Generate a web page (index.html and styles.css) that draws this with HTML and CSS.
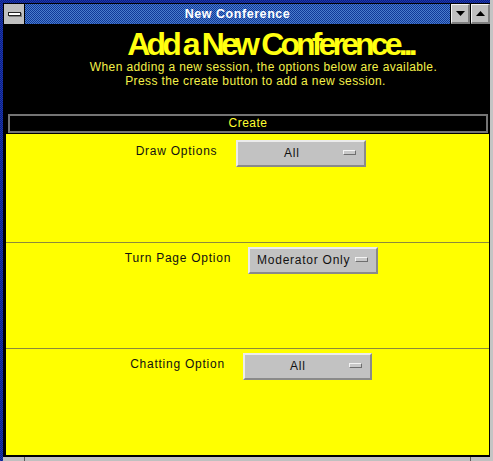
FILE: index.html
```html
<!DOCTYPE html>
<html>
<head>
<meta charset="utf-8">
<title>New Conference</title>
<link rel="stylesheet" href="styles.css">
</head>
<body>
<div class="window">
  <div class="titlebar">
    <div class="sysmenu"><span class="sysbar"></span></div>
    <div class="caption">New Conference</div>
    <div class="tbtn"><svg width="9" height="5" viewBox="0 0 9 5"><polygon points="0,0 9,0 4.5,5" fill="#000"/></svg></div>
    <div class="tbtn"><svg width="9" height="5" viewBox="0 0 9 5"><polygon points="0,5 9,5 4.5,0" fill="#000"/></svg></div>
  </div>
  <div class="client">
    <header class="banner">
      <h1 class="headline">Add a New Conference...</h1>
      <p class="intro intro-1">When adding a new session, the options below are available.</p>
      <p class="intro intro-2">Press the create button to add a new session.</p>
    </header>
    <div class="create">Create</div>
    <div class="panel">
      <section class="opt">
        <div class="row row-1">
          <span class="label">Draw Options</span>
          <div class="select"><span class="value">All</span><i class="ind"></i></div>
        </div>
      </section>
      <section class="opt sep">
        <div class="row row-2">
          <span class="label">Turn Page Option</span>
          <div class="select"><span class="value">Moderator Only</span><i class="ind"></i></div>
        </div>
      </section>
      <section class="opt sep">
        <div class="row row-3">
          <span class="label">Chatting Option</span>
          <div class="select narrow"><span class="value">All</span><i class="ind"></i></div>
        </div>
      </section>
    </div>
  </div>
  <div class="bottom"><span class="tick"></span><span class="tick"></span></div>
</div>
</body>
</html>
```

FILE: styles.css
```css
* { box-sizing: border-box; }
html, body { margin: 0; padding: 0; background: #000; }
body { font-family: "Liberation Sans", Arial, sans-serif; }

.window {
  width: 493px;
  height: 461px;
  background: repeating-conic-gradient(#0a1c88 0 25%, #1e3aa8 0 50%) 0 0 / 2px 2px;
  padding: 3px 0 0 3px;
  border-right: 3px solid #c4c4c4;
  display: flex;
  flex-direction: column;
  overflow: hidden;
}

.titlebar {
  height: 22px;
  background: #000;
  display: flex;
  column-gap: 1px;
  padding: 1px 0 1px 1px;
  flex: none;
}
.sysmenu {
  width: 20px;
  background: #c0c0c0;
  display: flex;
  align-items: center;
  justify-content: center;
}
.sysbar {
  width: 13px;
  height: 4px;
  background: #fff;
  border: 1px solid #222;
  box-shadow: 1px 1px 0 #808080;
}
.caption {
  flex: 1;
  background: repeating-conic-gradient(#103898 0 25%, #4a7ccc 0 50%) 0 0 / 2px 2px;
  color: #fff;
  font-weight: bold;
  font-size: 12.5px;
  letter-spacing: 0.55px;
  text-align: center;
  line-height: 20px;
}
.tbtn {
  width: 19px;
  background: #c0c0c0;
  border-top: 1px solid #f4f4f4;
  border-left: 1px solid #f4f4f4;
  border-right: 2px solid #808080;
  border-bottom: 2px solid #808080;
  display: flex;
  align-items: center;
  justify-content: center;
}

.client {
  flex: 1;
  background: #000;
  display: flex;
  flex-direction: column;
  min-height: 0;
}

.banner {
  padding-top: 4px;
  height: 89px;
  color: #ffff00;
}
.headline {
  margin: 0;
  font-size: 32px;
  line-height: 30px;
  font-weight: bold;
  letter-spacing: -3.85px;
  text-align: center;
  padding-left: 48px;
  color: #ffff10;
}
.intro {
  margin: 0;
  font-size: 12px;
  line-height: 13px;
  letter-spacing: 0.38px;
  text-align: center;
  color: #f4f048;
}
.intro-1 { padding-left: 34px; margin-top: 2px; }
.intro-2 { padding-left: 18px; margin-top: 1px; }

.create {
  margin: 0 2px 0 5px;
  height: 19px;
  border: 2px solid #747474;
  color: #ffff30;
  font-size: 12px;
  letter-spacing: 0.5px;
  line-height: 14px;
  text-align: center;
  flex: none;
}

.panel {
  flex: 1;
  margin: 1px 1px 1px 3px;
  background: #ffff00;
  display: flex;
  flex-direction: column;
}
.opt {
  flex: 1;
  padding-top: 6px;
}
.opt.sep {
  border-top: 1px solid #8c8a3c;
  padding-top: 4px;
}
.row {
  display: flex;
  justify-content: center;
  align-items: flex-start;
  column-gap: 18px;
  padding-left: 7px;
}
.row-1 { column-gap: 19px; }
.row-2 { column-gap: 17px; padding-left: 8px; }

.label {
  margin-top: 4px;
  font-size: 12px;
  line-height: 14px;
  letter-spacing: 0.75px;
  color: #111;
}
.select {
  width: 130px;
  height: 27px;
  background: #c2c2c2;
  border: 2px solid;
  border-color: #ececec #8a8a8a #8a8a8a #ececec;
  display: flex;
  align-items: flex-start;
  padding: 3px 8px 0 2px;
  font-size: 12px;
  line-height: 16px;
  letter-spacing: 0.75px;
  color: #111;
}
.select.narrow { width: 129px; }
.value { flex: 1; text-align: center; }
.ind {
  width: 13px;
  height: 5px;
  margin-top: 5px;
  background: #c8c8c8;
  border: 1px solid;
  border-color: #f4f4f4 #6e6e6e #6e6e6e #f4f4f4;
}

.bottom {
  height: 5px;
  flex: none;
  background: #c0c0c0;
  border-top: 1px solid #000;
  display: flex;
  justify-content: space-between;
  padding: 0 19px 0 21px;
}
.tick {
  width: 1px;
  background: #5a5a5a;
}
```
